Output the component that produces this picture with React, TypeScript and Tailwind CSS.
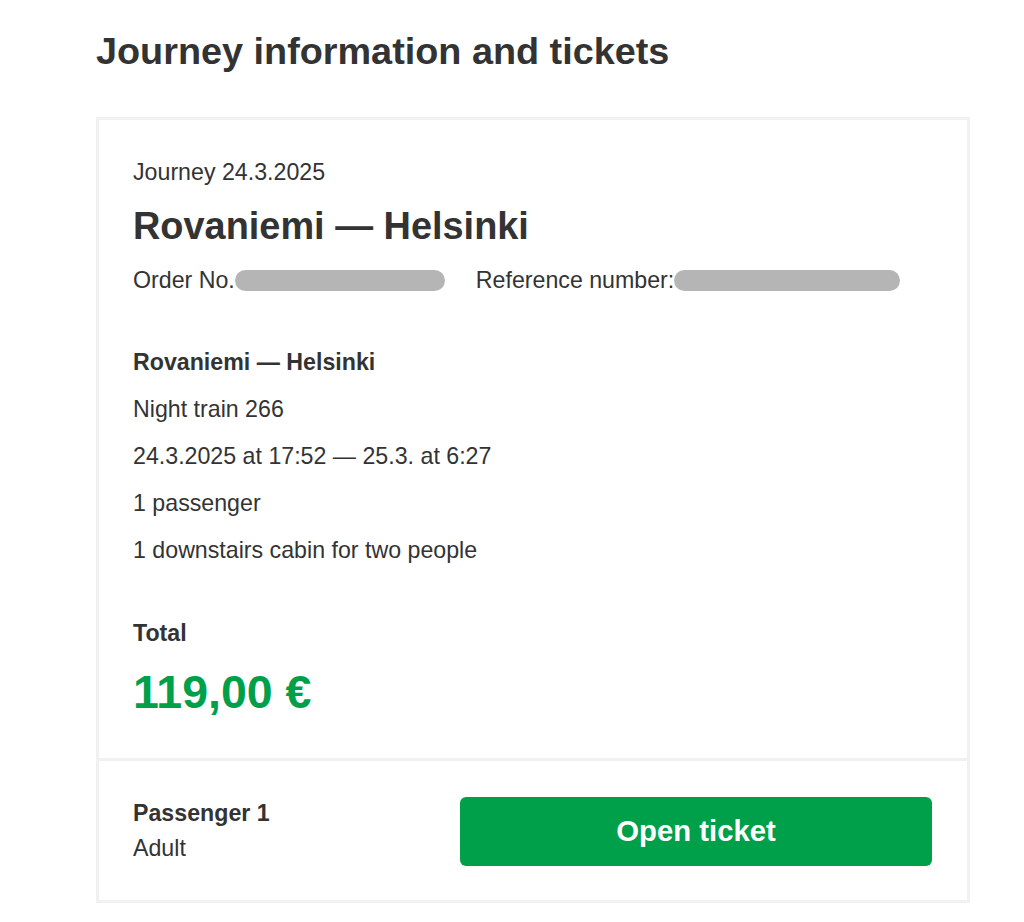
import React from "react";

export default function App() {
  const lines = [
    "Night train 266",
    "24.3.2025 at 17:52 — 25.3. at 6:27",
    "1 passenger",
    "1 downstairs cabin for two people",
  ];
  return (
    <div
      className="min-h-[922px] w-[1024px] bg-white pl-[96px] pt-[29px] text-[#333333]"
      style={{ fontFamily: '"Liberation Sans", Arial, sans-serif' }}
    >
      <h1 className="text-[37.8px] font-bold leading-[44px]">Journey information and tickets</h1>
      <div className="mt-[44px] w-[874px] border-[3px] border-[#f1f1f1]">
        <div className="pl-[34px] pr-[35px] pt-[38px] pb-[40px]">
          <div className="text-[23.2px] leading-[28px]">Journey 24.3.2025</div>
          <div className="mt-[18px] text-[37.9px] font-bold leading-[44px]">Rovaniemi — Helsinki</div>
          <div className="mt-[18px] flex items-center text-[23.2px] leading-[28px]">
            <span>Order No.</span>
            <span className="h-[21px] w-[210px] rounded-full bg-[#b5b5b5]" />
            <span className="ml-[31px]">Reference number:</span>
            <span className="h-[21px] w-[226px] rounded-full bg-[#b5b5b5]" />
          </div>
          <div className="mt-[54px] text-[23.2px] font-bold leading-[28px]">Rovaniemi — Helsinki</div>
          {lines.map((l) => (
            <div key={l} className="mt-[19px] text-[23.2px] leading-[28px]">
              {l}
            </div>
          ))}
          <div className="mt-[55px] text-[23.2px] font-bold leading-[28px]">Total</div>
          <div className="mt-[19px] text-[46.5px] font-bold leading-[52px] text-[#00a04a]">119,00 €</div>
        </div>
        <div className="flex items-center border-t-[3px] border-[#f1f1f1] pl-[34px] pr-[35px] pt-[35px] pb-[34px]">
          <div className="flex-1 text-[23.2px] leading-[35px]">
            <div className="font-bold">Passenger 1</div>
            <div>Adult</div>
          </div>
          <button className="flex h-[69px] w-[472px] items-center justify-center rounded-[6px] bg-[#00a04a] text-[29.3px] font-bold text-white">
            Open ticket
          </button>
        </div>
      </div>
    </div>
  );
}
